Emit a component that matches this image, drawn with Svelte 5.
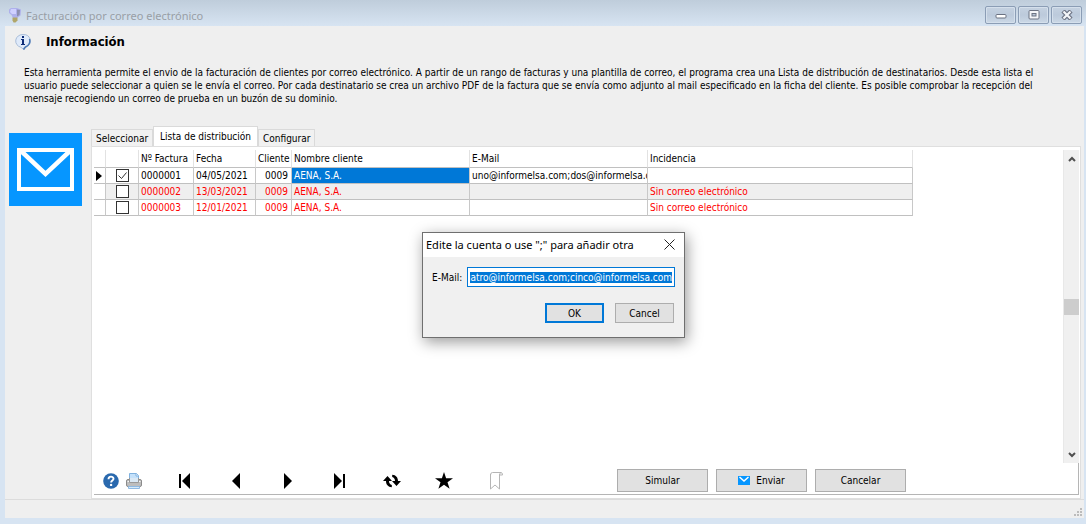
<script lang="ts">
    import { onMount } from "svelte";

    interface Invoice {
        number: string;
        date: string;
        client: string;
        name: string;
        email: string;
        issue: string;
        checked: boolean;
    }

    const emails =
        "uno@informelsa.com;dos@informelsa.com;tres@informelsa.com;cuatro@informelsa.com;cinco@informelsa.com";

    let invoices: Invoice[] = $state([
        { number: "0000001", date: "04/05/2021", client: "0009", name: "AENA, S.A.", email: emails, issue: "", checked: true },
        { number: "0000002", date: "13/03/2021", client: "0009", name: "AENA, S.A.", email: "", issue: "Sin correo electrónico", checked: false },
        { number: "0000003", date: "12/01/2021", client: "0009", name: "AENA, S.A.", email: "", issue: "Sin correo electrónico", checked: false },
    ]);

    const tabs = ["Seleccionar", "Lista de distribución", "Configurar"];
    let activeTab = $state("Lista de distribución");
    let draft = $state(emails);
    let input: HTMLInputElement;

    onMount(() => {
        input.focus();
        input.select();
        input.scrollLeft = input.scrollWidth;
    });
</script>

<div class="window">
    <header class="titlebar">
        <svg class="titlebar__icon" width="14" height="16" viewBox="0 0 14 16">
            <path d="M3 1h6l4 1.500-.5 6L9 11H5L3.500 8 1 6V2.500z" fill="#aeb0ec" />
            <path d="M3 2h5v5H4L2 5z" fill="#cfd0ff" />
            <path d="M9 2.500l3 .5-.5 5L9 9.500z" fill="#8d8fb0" />
            <path d="M4.500 10.500h5v3l-2 2h-2l-1-2z" fill="#b0a66a" />
        </svg>
        <span class="titlebar__text">Facturación por correo electrónico</span>
        <div class="titlebar__buttons">
            <button aria-label="Minimizar">
                <svg width="12" height="10" viewBox="0 0 12 10">
                    <rect x="1" y="4.500" width="10" height="3.500" rx="1" fill="#fff" stroke="#6b7282" />
                </svg>
            </button>
            <button aria-label="Maximizar">
                <svg width="12" height="10" viewBox="0 0 12 10">
                    <rect x="1" y=".5" width="10" height="8.500" rx="1" fill="#f4f6f9" stroke="#6b7282" />
                    <rect x="4" y="3.500" width="4" height="2.500" fill="#b9c6d8" stroke="#6b7282" />
                </svg>
            </button>
            <button aria-label="Cerrar">
                <svg width="12" height="10" viewBox="0 0 12 10">
                    <path d="M2 1l8 8M10 1L2 9" stroke="#6b7282" stroke-width="4.500" />
                    <path d="M2.500 1.500l7 7M9.500 1.500l-7 7" stroke="#f4f6f9" stroke-width="2.200" />
                </svg>
            </button>
        </div>
    </header>

    <main class="client">
        <div class="heading">
            <svg width="16" height="16" viewBox="0 0 16 16">
                <path d="M8 .5a7 6.500 0 0 1 3 12.500l-2 .5v2.300L6 13.300A7 6.500 0 0 1 8 .5z" fill="#dfeafa" stroke="#a9bdd8" />
                <path d="M14.500 5a7 6.500 0 0 1-4 8L8.500 15.500" fill="none" stroke="#4a78b4" stroke-width="1.500" />
                <path d="M7 2h2v2H7zM6 5h3v5h1v1H6v-1h1V6H6z" fill="#0d2c78" />
            </svg>
            <h1>Información</h1>
        </div>
        <p class="intro">
            Esta herramienta permite el envio de la facturación de clientes por correo electrónico. A partir de un rango de facturas y una plantilla de correo, el programa crea una Lista de distribución de destinatarios. Desde esta lista el
            <br />usuario puede seleccionar a quien se le envía el correo. Por cada destinatario se crea un archivo PDF de la factura que se envía como adjunto al mail especificado en la ficha del cliente. Es posible comprobar la recepción del
            <br />mensaje recogiendo un correo de prueba en un buzón de su dominio.
        </p>

        <div class="body">
            <svg class="mail" width="73" height="73" viewBox="0 0 73 73">
                <rect width="73" height="73" fill="#0696ff" />
                <rect x="10" y="17" width="53" height="39" fill="none" stroke="#fff" stroke-width="4" />
                <path d="M11 17l25.500 24L62 17" fill="none" stroke="#fff" stroke-width="4.500" />
            </svg>

            <div class="notebook">
                <div class="tabs" role="tablist">
                    {#each tabs as tab}
                        <button
                            role="tab"
                            class="tab"
                            class:tab--active={tab === activeTab}
                            aria-selected={tab === activeTab}
                            onclick={() => (activeTab = tab)}>{tab}</button
                        >
                    {/each}
                </div>

                <div class="panel">
                    <div class="panel__grid">
                        <div class="panel__table">
                            <table>
                                <colgroup>
                                    <col class="col-mark" />
                                    <col class="col-check" />
                                    <col class="col-number" />
                                    <col class="col-date" />
                                    <col class="col-client" />
                                    <col class="col-name" />
                                    <col class="col-email" />
                                    <col class="col-issue" />
                                </colgroup>
                                <thead>
                                    <tr>
                                        <th></th>
                                        <th></th>
                                        <th>Nº Factura</th>
                                        <th>Fecha</th>
                                        <th>Cliente</th>
                                        <th>Nombre cliente</th>
                                        <th>E-Mail</th>
                                        <th>Incidencia</th>
                                    </tr>
                                </thead>
                                <tbody>
                                    {#each invoices as invoice, i}
                                        <tr class:error={invoice.issue} class:odd={i % 2 === 1}>
                                            <td class="mark">
                                                {#if i === 0}
                                                    <svg width="6" height="10" viewBox="0 0 6 10"><path d="M0 0l6 5-6 5z" /></svg>
                                                {/if}
                                            </td>
                                            <td class="check">
                                                <input type="checkbox" aria-label={invoice.number} bind:checked={invoice.checked} />
                                            </td>
                                            <td>{invoice.number}</td>
                                            <td>{invoice.date}</td>
                                            <td class="right">{invoice.client}</td>
                                            <td class:selected={i === 0}>{invoice.name}</td>
                                            <td>{invoice.email}</td>
                                            <td>{invoice.issue}</td>
                                        </tr>
                                    {/each}
                                </tbody>
                            </table>
                        </div>
                        <div class="scrollbar">
                            <button aria-label="Subir">
                                <svg width="8" height="6" viewBox="0 0 8 6"><path d="M1 5l3-3 3 3" /></svg>
                            </button>
                            <div class="scrollbar__track"><div class="scrollbar__thumb"></div></div>
                            <button aria-label="Bajar">
                                <svg width="8" height="6" viewBox="0 0 8 6"><path d="M1 1l3 3 3-3" /></svg>
                            </button>
                        </div>
                    </div>

                    <div class="toolbar">
                        <button class="tool tool--small" aria-label="Ayuda">
                            <svg width="16" height="16" viewBox="0 0 16 16">
                                <circle cx="8" cy="8" r="7.800" fill="#2a69ae" />
                                <path d="M5.500 6.200c0-3.400 5-3.200 5-.4 0 1.800-2.400 1.700-2.400 3.700" fill="none" stroke="#fff" stroke-width="1.900" />
                                <circle cx="8.100" cy="11.900" r="1.200" fill="#fff" />
                            </svg>
                        </button>
                        <button class="tool tool--small" aria-label="Imprimir">
                            <svg width="16" height="16" viewBox="0 0 16 16">
                                <path d="M3.500 7V.5h7l2 2V7z" fill="#c5e1fa" stroke="#7fb1df" />
                                <path d="M10 .5V3h2.500" fill="#fff" stroke="#7fb1df" />
                                <rect x=".5" y="6.500" width="15" height="7" rx="1.500" fill="#bdbdbd" stroke="#8a8a8a" />
                                <path d="M1.500 8.500h13" stroke="#f7f7f7" />
                                <path d="M3.500 5v4.500h9V5" fill="#d9e8f5" stroke="#999" />
                                <path d="M2.500 13.500h11v2h-11z" fill="#d5eafb" stroke="#8fb9e2" />
                            </svg>
                        </button>
                        <button class="tool" aria-label="Primero">
                            <svg width="12" height="16" viewBox="0 0 12 16"><path d="M1 1h2v14H1zM12 0v16L4 8z" /></svg>
                        </button>
                        <button class="tool" aria-label="Anterior">
                            <svg width="8" height="16" viewBox="0 0 8 16"><path d="M8 0v16L0 8z" /></svg>
                        </button>
                        <button class="tool" aria-label="Siguiente">
                            <svg width="8" height="16" viewBox="0 0 8 16"><path d="M0 0l8 8-8 8z" /></svg>
                        </button>
                        <button class="tool" aria-label="Último">
                            <svg width="12" height="16" viewBox="0 0 12 16"><path d="M9 1h2v14H9zM0 0v16l8-8z" /></svg>
                        </button>
                        <button class="tool" aria-label="Actualizar">
                            <svg width="18" height="14" viewBox="0 0 18 14">
                                <path d="M0 7l4.500-5L9 7H6c0 2 1 3.500 2.800 4v2.300C5 13 3 10.500 3 7z" />
                                <path d="M18 7l-4.500 5L9 7h3c0-2-1-3.500-2.800-4V.7C13 1 15 3.500 15 7z" />
                            </svg>
                        </button>
                        <button class="tool" aria-label="Favorito">
                            <svg width="18" height="17" viewBox="0 0 18 17"><path d="M9 0l2.100 6.200H18l-5.500 4 2.100 6.500L9 12.700l-5.600 4 2.100-6.500L0 6.200h6.900z" /></svg>
                        </button>
                        <button class="tool" aria-label="Marcador">
                            <svg width="14" height="18" viewBox="0 0 14 18">
                                <path d="M1.500 2v15L6 13l4.500 4V2.500" fill="none" stroke="#b5b5b5" />
                                <path d="M1.500 3q0-2.500 2-2.500h8.500q1.500 0 1.500 2.500h-3q0-2 1.500-2.500" fill="none" stroke="#b5b5b5" />
                            </svg>
                        </button>
                        <div class="actions">
                            <button>Simular</button>
                            <button>
                                <svg width="12" height="9" viewBox="0 0 12 9">
                                    <rect width="12" height="9" fill="#0696ff" />
                                    <path d="M1.500 1L6 5l4.500-4" fill="none" stroke="#fff" stroke-width="1.500" />
                                </svg>
                                Enviar
                            </button>
                            <button>Cancelar</button>
                        </div>
                    </div>
                </div>
            </div>
        </div>

        <footer class="status">
            <svg width="8" height="8" viewBox="0 0 8 8">
                <path d="M6 0h2v2H6zM3 3h2v2H3zM6 3h2v2H6zM0 6h2v2H0zM3 6h2v2H3zM6 6h2v2H6z" fill="#bcbcbc" />
            </svg>
        </footer>
    </main>

    <form class="dialog" role="dialog" aria-labelledby="dialog-title" onsubmit={(e) => e.preventDefault()}>
        <div class="dialog__title">
            <span id="dialog-title">Edite la cuenta o use ";" para añadir otra</span>
            <button type="button" aria-label="Cerrar">
                <svg width="11" height="11" viewBox="0 0 11 11"><path d="M.5.5l10 10M10.500.5l-10 10" stroke="#222" /></svg>
            </button>
        </div>
        <div class="dialog__field">
            <label for="email">E-Mail:</label>
            <input id="email" type="text" bind:this={input} bind:value={draft} />
        </div>
        <div class="dialog__buttons">
            <button type="submit" class="default">OK</button>
            <button type="button">Cancel</button>
        </div>
    </form>
</div>

<style>
    :global(body) {
        margin: 0;
    }
    .window {
        --sans: "DejaVu Sans Condensed", Tahoma, sans-serif;
        --ui: "Noto Sans", "Segoe UI", sans-serif;
        position: relative;
        box-sizing: border-box;
        display: flex;
        flex-direction: column;
        min-height: 100vh;
        padding: 0 2px 6px 5px;
        background: linear-gradient(#bfcddb, #d7e4f2 26px);
        color: #000;
        font-family: var(--sans);
        font-size: 10px;
    }
    button {
        box-sizing: border-box;
        padding: 0;
        border: 0;
        background: none;
        color: inherit;
        font: inherit;
    }
    svg {
        display: block;
        flex: none;
    }
    .titlebar {
        display: flex;
        align-items: center;
        gap: 4px;
        height: 26px;
        padding: 4px 0 0 3px;
        box-sizing: border-box;
    }
    .titlebar__text {
        flex: 1;
        color: #999fa6;
        font-family: var(--ui);
        font-size: 11px;
    }
    .titlebar__buttons {
        display: flex;
        gap: 2px;
        padding-right: 2px;
    }
    .titlebar__buttons button {
        display: grid;
        place-items: center;
        width: 31px;
        height: 18px;
        border: 1px solid #8b9db5;
        border-radius: 2px;
        background: linear-gradient(#c5d2e1, #bccadb 50%, #cbd8e6);
        box-shadow: inset 0 0 0 1px #d5e0ec;
    }
    .client {
        flex: 1;
        display: flex;
        flex-direction: column;
        background: #efefef;
    }
    .heading {
        display: flex;
        align-items: center;
        gap: 15px;
        height: 16px;
        padding: 8px 10px 0;
    }
    h1 {
        margin: 0;
        font-size: 13px;
        line-height: 16px;
    }
    .intro {
        margin: 0;
        padding: 16px 19px 0;
        line-height: 13px;
        white-space: nowrap;
    }
    .body {
        flex: 1;
        display: flex;
        gap: 9px;
        padding: 21px 3px 0 4px;
    }
    .mail {
        margin-top: 7px;
    }
    .notebook {
        flex: 1;
        min-width: 0;
        display: flex;
        flex-direction: column;
    }
    .tabs {
        display: flex;
        align-items: flex-end;
        height: 20px;
    }
    .tab {
        height: 17px;
        padding: 0 4px;
        border: 1px solid #dadada;
        border-bottom: 0;
        background: #f1f1f1;
    }
    .tab--active {
        height: 20px;
        padding: 0 6px;
        background: #fff;
    }
    .panel {
        flex: 1;
        display: flex;
        flex-direction: column;
        padding: 3px 1px 3px 2px;
        border: 1px solid #dfdfdf;
        background: #fff;
    }
    .panel__grid {
        flex: 1;
        display: flex;
    }
    .panel__table {
        flex: 1;
        min-width: 0;
    }
    table {
        width: 819px;
        border-collapse: separate;
        border-spacing: 0;
        table-layout: fixed;
    }
    .col-mark {
        width: 12px;
    }
    .col-check {
        width: 33px;
    }
    .col-number {
        width: 55px;
    }
    .col-date {
        width: 62px;
    }
    .col-client {
        width: 36px;
    }
    .col-name,
    .col-email {
        width: 178px;
    }
    .col-issue {
        width: 265px;
    }
    th,
    td {
        box-sizing: border-box;
        height: 16px;
        padding: 0 0 0 2px;
        overflow: hidden;
        border-right: 1px solid #c8c8c8;
        border-bottom: 1px solid #c0c0c0;
        font-weight: normal;
        line-height: 15px;
        text-align: left;
        white-space: nowrap;
    }
    th {
        height: 18px;
        border-right-color: #e2e2e2;
    }
    .odd td {
        background: #efefef;
    }
    .error td {
        color: #f00;
    }
    .error .mark,
    td.mark {
        padding: 0 0 0 2px;
        background: #fff;
    }
    .check {
        padding: 0 0 0 10px;
    }
    .check input {
        appearance: none;
        display: block;
        box-sizing: border-box;
        width: 13px;
        height: 13px;
        margin: 0;
        border: 1px solid #333;
        background: #fff;
    }
    .check input:checked {
        background: #fff url("data:image/svg+xml,%3Csvg xmlns='http://www.w3.org/2000/svg' viewBox='0 0 11 11'%3E%3Cpath d='M1.500 5.500l3 3 5-6' fill='none' stroke='%23333'/%3E%3C/svg%3E");
    }
    td.right {
        padding-right: 3px;
        text-align: right;
    }
    td.selected {
        background: #0078d7;
        color: #fff;
    }
    .scrollbar {
        display: flex;
        flex-direction: column;
        width: 15px;
        border-left: 1px solid #e8e8e8;
        background: #f0f0f0;
    }
    .scrollbar button {
        display: grid;
        place-items: center;
        height: 17px;
    }
    .scrollbar path {
        fill: none;
        stroke: #505050;
        stroke-width: 2;
    }
    .scrollbar__track {
        flex: 1;
        display: flex;
        flex-direction: column;
        justify-content: center;
    }
    .scrollbar__thumb {
        height: 16px;
        background: #cdcdcd;
    }
    .toolbar {
        display: flex;
        align-items: center;
        box-sizing: border-box;
        height: 32px;
        padding: 4px 4px 0 5px;
        border-right: 1px solid #b5b5b5;
        border-bottom: 1px solid #b5b5b5;
    }
    .tool {
        display: grid;
        place-items: center;
        width: 52px;
        height: 22px;
    }
    .tool--small {
        width: 23px;
    }
    .tool--small + .tool:not(.tool--small) {
        margin-left: 13px;
    }
    .actions {
        display: flex;
        gap: 8px;
        margin-left: 95px;
    }
    .actions button {
        display: flex;
        align-items: center;
        justify-content: center;
        gap: 6px;
        width: 91px;
        height: 23px;
        border: 1px solid #adadad;
        background: #e1e1e1;
    }
    .status {
        display: flex;
        align-items: flex-end;
        justify-content: flex-end;
        box-sizing: border-box;
        height: 19px;
        padding: 2px;
        border-top: 1px solid #dcdcdc;
    }
    .dialog {
        position: absolute;
        top: 232px;
        left: 422px;
        box-sizing: border-box;
        width: 263px;
        height: 106px;
        border: 1px solid #6f6f6f;
        background: #f0f0f0;
        box-shadow: 2px 4px 14px rgba(0, 0, 0, 0.4);
    }
    .dialog__title {
        display: flex;
        align-items: center;
        justify-content: space-between;
        box-sizing: border-box;
        height: 24px;
        padding: 0 9px 2px 3px;
        background: #fff;
        font-family: var(--ui);
        font-size: 11px;
    }
    .dialog__field {
        display: flex;
        align-items: center;
        gap: 5px;
        padding: 10px 9px 0;
    }
    .dialog__field input {
        flex: 1;
        min-width: 0;
        box-sizing: border-box;
        height: 20px;
        padding: 0 2px;
        border: 1px solid #0078d7;
        outline: none;
        background: #fff;
        font: inherit;
        line-height: 15px;
    }
    .dialog__field input::selection {
        background: #0078d7;
        color: #fff;
    }
    .dialog__buttons {
        display: flex;
        justify-content: flex-end;
        gap: 11px;
        padding: 16px 10px 0;
    }
    .dialog__buttons button {
        width: 59px;
        height: 20px;
        border: 1px solid #adadad;
        background: #e1e1e1;
    }
    .dialog__buttons .default {
        border: 2px solid #0078d7;
    }
</style>
